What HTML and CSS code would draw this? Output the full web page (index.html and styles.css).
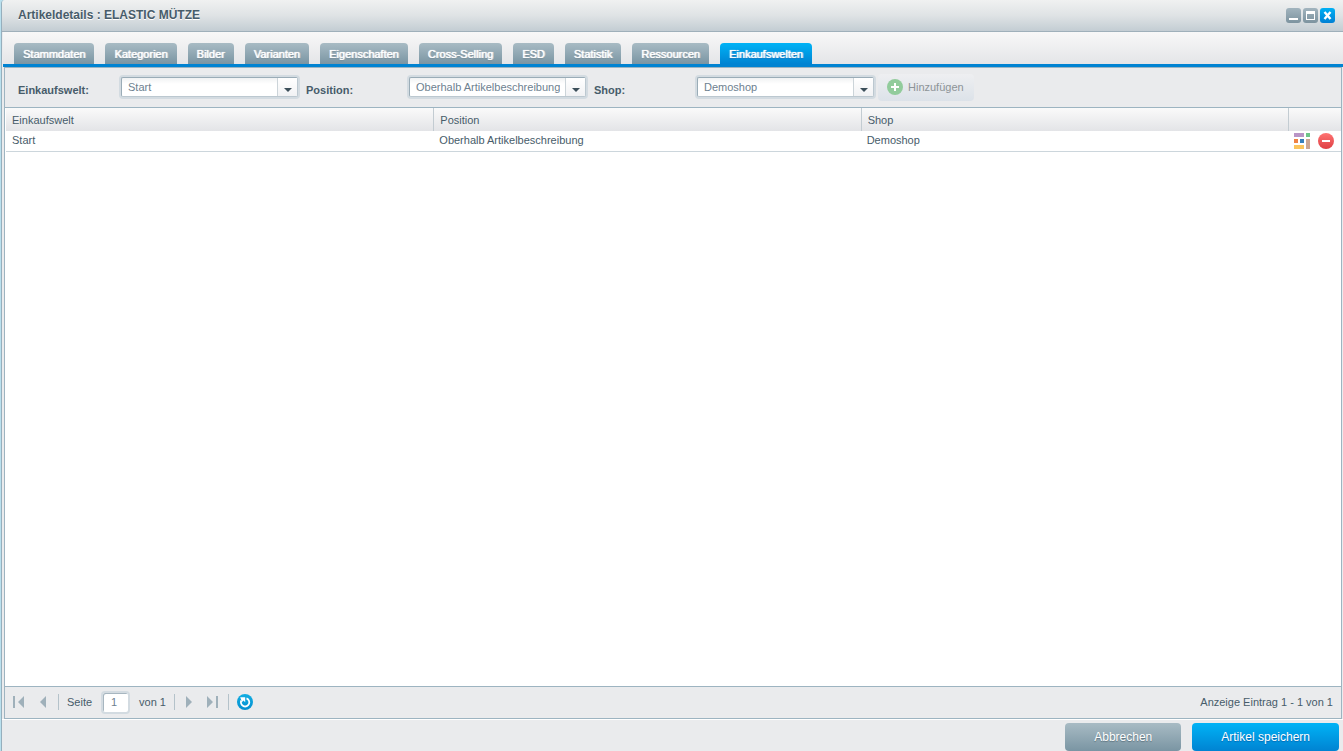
FILE: index.html
```html
<!DOCTYPE html>
<html lang="de">
<head>
<meta charset="utf-8">
<title>Artikeldetails : ELASTIC MÜTZE</title>
<link rel="stylesheet" href="styles.css">
</head>
<body>
<div class="window">
  <header class="titlebar">
    <h1 class="title">Artikeldetails : ELASTIC MÜTZE</h1>
    <div class="tools">
      <button class="tool" aria-label="Minimieren"><svg width="15" height="15" viewBox="0 0 15 15"><path d="M3 10h9v2H3z" fill="#fff"/></svg></button>
      <button class="tool" aria-label="Maximieren"><svg width="15" height="15" viewBox="0 0 15 15"><path fill-rule="evenodd" d="M3 3h9v9H3zM4 6v5h7V6z" fill="#fff"/></svg></button>
      <button class="tool tool-close" aria-label="Schließen"><svg width="15" height="15" viewBox="0 0 15 15"><path d="M4.500 4l6 7M10.500 4l-6 7" stroke="#fff" stroke-width="2.400"/></svg></button>
    </div>
  </header>
  <nav class="tabs">
    <button class="tab">Stammdaten</button>
    <button class="tab">Kategorien</button>
    <button class="tab">Bilder</button>
    <button class="tab">Varianten</button>
    <button class="tab">Eigenschaften</button>
    <button class="tab">Cross-Selling</button>
    <button class="tab">ESD</button>
    <button class="tab">Statistik</button>
    <button class="tab">Ressourcen</button>
    <button class="tab tab-active">Einkaufswelten</button>
  </nav>
  <main class="panel">
    <form class="toolbar">
      <div class="field">
        <label class="label" for="world">Einkaufswelt:</label>
        <div class="combo"><select class="select" id="world"><option>Start</option></select><span class="trigger"></span></div>
      </div>
      <div class="field">
        <label class="label" for="position">Position:</label>
        <div class="combo"><select class="select" id="position"><option>Oberhalb Artikelbeschreibung</option></select><span class="trigger"></span></div>
      </div>
      <div class="field">
        <label class="label" for="shop">Shop:</label>
        <div class="combo"><select class="select" id="shop"><option>Demoshop</option></select><span class="trigger"></span></div>
      </div>
      <button class="add" type="button" disabled>
        <svg width="16" height="16" viewBox="0 0 16 16"><circle cx="8" cy="8" r="8" fill="#92cc9c"/><path d="M8 4v8M4 8h8" stroke="#fff" stroke-width="2"/></svg>
        Hinzufügen
      </button>
    </form>
    <div class="grid">
      <table class="table">
        <thead>
          <tr><th>Einkaufswelt</th><th>Position</th><th>Shop</th><th class="actions-head" aria-label="Aktionen"></th></tr>
        </thead>
        <tbody>
          <tr>
            <td>Start</td><td>Oberhalb Artikelbeschreibung</td><td>Demoshop</td>
            <td class="actions-cell"><div class="actions">
              <button class="icon" aria-label="Einkaufswelt öffnen"><svg width="16" height="16" viewBox="0 0 16 16"><path d="M0 0h10v4H0z" fill="#b995c6"/><path d="M12 0h4v4h-4z" fill="#6ec589"/><path d="M0 6h4v4H0z" fill="#ef8344"/><path d="M6 6h4v4H6z" fill="#377fba"/><path d="M12 6h4v10h-4z" fill="#cca592"/><path d="M0 12h10v4H0z" fill="#fbc45c"/></svg></button>
              <button class="icon" aria-label="Löschen"><svg width="16" height="16" viewBox="0 0 16 16"><defs><linearGradient id="red" x2="0" y2="1"><stop stop-color="#ff7372"/><stop offset="1" stop-color="#de4044"/></linearGradient></defs><circle cx="8" cy="8" r="8" fill="url(#red)"/><path d="M4 7h8v2H4z" fill="#fff"/></svg></button>
            </div></td>
          </tr>
        </tbody>
      </table>
    </div>
    <div class="pager">
      <button class="page-btn" aria-label="Erste Seite"><svg width="12" height="12" viewBox="0 0 12 12"><path d="M0 0h2v12H0zM11 0v12L5 6z" fill="#9fb0ba"/></svg></button>
      <button class="page-btn page-btn-last" aria-label="Vorherige Seite"><svg width="12" height="12" viewBox="0 0 12 12"><path d="M9 0v12L3 6z" fill="#9fb0ba"/></svg></button>
      <span class="sep"></span>
      <label class="page-label" for="page">Seite</label>
      <input class="page-input" id="page" type="text" value="1">
      <span class="page-total">von 1</span>
      <span class="sep"></span>
      <button class="page-btn" aria-label="Nächste Seite"><svg width="12" height="12" viewBox="0 0 12 12"><path d="M3 0v12l6-6z" fill="#9fb0ba"/></svg></button>
      <button class="page-btn page-btn-last" aria-label="Letzte Seite"><svg width="12" height="12" viewBox="0 0 12 12"><path d="M9 0h2v12H9zM0 0v12l6-6z" fill="#9fb0ba"/></svg></button>
      <span class="sep"></span>
      <button class="refresh" aria-label="Aktualisieren"><svg width="16" height="16" viewBox="0 0 16 16"><defs><linearGradient id="blue" x2="0" y2="1"><stop stop-color="#12aee2"/><stop offset="1" stop-color="#058fd0"/></linearGradient></defs><circle cx="8" cy="8" r="8" fill="url(#blue)"/><path d="M9.500 4.300A4.200 4.200 0 1 1 4.300 6.500" fill="none" stroke="#fff" stroke-width="1.800"/><path d="M3.200 3.200h5v5L6.500 6.500 5 8z" fill="#fff"/></svg></button>
      <span class="status">Anzeige Eintrag 1 - 1 von 1</span>
    </div>
  </main>
  <footer class="footer">
    <button class="btn">Abbrechen</button>
    <button class="btn btn-primary">Artikel speichern</button>
  </footer>
</div>
</body>
</html>
```

FILE: styles.css
```css
* { box-sizing: border-box; }

body {
  margin: 0;
  background: #b9e0ee;
  color: #475c6a;
  font: 11px/16px "Liberation Sans", Arial, sans-serif;
}

button, input, select { font: inherit; color: inherit; margin: 0; }
button { border: 0; padding: 0; background: none; }
svg { display: block; }

.window {
  display: flex;
  flex-direction: column;
  height: 100vh;
  margin-left: 1px;
  border-left: 1px solid #96afbd;
  border-top-left-radius: 4px;
  background: #eaebed;
  overflow: hidden;
}

.titlebar {
  flex: none;
  display: flex;
  align-items: center;
  justify-content: space-between;
  height: 32px;
  padding: 0 8px 0 16px;
  border-bottom: 1px solid #9fb0ba;
  background: linear-gradient(#f0f1f1, #dfe3e5 50%, #c3cdd3);
}

.title { margin: 0; padding-bottom: 2px; font-size: 12px; line-height: 16px; text-shadow: 0 1px 0 #fff; }

.tools { display: flex; gap: 2px; }

.tool { border-radius: 3px; background: linear-gradient(#a2b4be, #7c939f); }
.tool-close { background: linear-gradient(#00b0f4, #0080d4); }

.tabs {
  flex: none;
  display: flex;
  align-items: flex-end;
  gap: 11px;
  height: 35px;
  margin-left: 1px;
  padding-left: 11px;
  border-bottom: 3px solid #0083d2;
  background: linear-gradient(#f8f8f8, #e4e5e8);
}

.tab {
  height: 21px;
  padding: 0 9px;
  border-radius: 4px 4px 0 0;
  background: linear-gradient(#a8bbc4, #7a95a3);
  color: #fff;
  line-height: 20px;
  text-shadow: 0 0 1px #fff, 1px 0 0 rgba(255, 255, 255, 0.6), 0 1px 1px #6b818d;
}

.tab-active {
  background: linear-gradient(#00b3f6, #0083d2);
  text-shadow: 0 0 1px #fff, 1px 0 0 rgba(255, 255, 255, 0.6), 0 1px 1px #0068b4;
}

.panel {
  flex: 1;
  display: flex;
  flex-direction: column;
  margin: 0 1px 0 2px;
  border: 1px solid #9db4c1;
  min-height: 0;
}

.toolbar {
  flex: none;
  display: flex;
  align-items: flex-start;
  height: 40px;
  padding: 7px 0 0 13px;
  border-bottom: 1px solid #9db4c1;
}

.field { display: flex; margin-right: 6px; }

.label { width: 101px; padding-top: 7px; font-weight: bold; }

.combo {
  position: relative;
  width: 181px;
  height: 24px;
  border: 2px solid #d3dbe1;
  border-radius: 4px;
}

.select {
  display: block;
  width: 100%;
  height: 20px;
  padding: 0 25px 0 6px;
  border: 1px solid;
  border-color: #9aacb7 #bcc8d0 #bcc8d0 #9aacb7;
  border-radius: 2px;
  appearance: none;
  background: linear-gradient(#f0f2f3, #fff 6px);
  color: #6d8190;
  outline: 0;
}

.trigger {
  position: absolute;
  top: 1px;
  right: 1px;
  bottom: 1px;
  width: 20px;
  border-left: 1px solid #ccd4d9;
  background: linear-gradient(#fff, #f1f2f4);
  pointer-events: none;
}

.trigger::after {
  content: "";
  position: absolute;
  top: 10px;
  left: 6px;
  border: 4px solid transparent;
  border-top-color: #3c4f5a;
  border-bottom: 0;
}

.field:nth-child(3) { margin-right: 2px; }

.add {
  display: flex;
  align-items: center;
  gap: 5px;
  height: 27px;
  padding: 0 10px 1px 9px;
  border-radius: 4px;
  margin-top: -1px;
  background: linear-gradient(#eeeff1, #dce2e9);
  color: #8d9397;
}

.grid { flex: 1; min-height: 0; padding-left: 1px; background: #fff; }

.table { width: 100%; border-collapse: separate; border-spacing: 0; table-layout: fixed; }

.table th {
  height: 23px;
  padding: 0 6px;
  background: linear-gradient(#fafafa, #e3e4e7);
  font-weight: normal;
  text-align: left;
}

.table th + th { border-left: 1px solid #c3ccd2; }
.table .actions-head { width: 53px; }

.table td { height: 21px; padding: 0 6px 2px; border-bottom: 1px solid #ccd6dc; }

.table .actions-cell { padding: 0 6px; }

.actions { display: flex; gap: 8px; }

.pager {
  flex: none;
  display: flex;
  align-items: center;
  height: 32px;
  padding: 0 8px 1px;
  border-top: 1px solid #9db4c1;
}

.page-btn { margin-right: 12px; }
.page-btn-last { margin-right: 9px; }
.sep { width: 1px; height: 16px; background: #b4c2ca; margin-right: 8px; }
.page-label { margin-right: 9px; }

.page-input {
  width: 29px;
  height: 23px;
  padding: 0 8px;
  border: 2px solid #d3dbe1;
  border-radius: 4px;
  background: #fff;
  box-shadow: inset 1px 1px 0 #a7b6c0;
  color: #6d8190;
}

.page-total { margin: 0 8px 0 9px; }
.status { margin-left: auto; }

.footer {
  flex: none;
  display: flex;
  justify-content: flex-end;
  gap: 11px;
  height: 32px;
  padding: 3px 4px 0;
  border-top: 1px solid #fff;
}

.btn {
  height: 28px;
  padding: 0 29px;
  border-radius: 4px;
  background: linear-gradient(#a8bbc4, #7a95a3);
  color: #fff;
  font-size: 12px;
  line-height: 28px;
  text-shadow: 0 1px 1px #5d737f;
}

.btn-primary { background: linear-gradient(#00b3f6, #0083d2); text-shadow: 0 1px 1px #0068b4; }
```
